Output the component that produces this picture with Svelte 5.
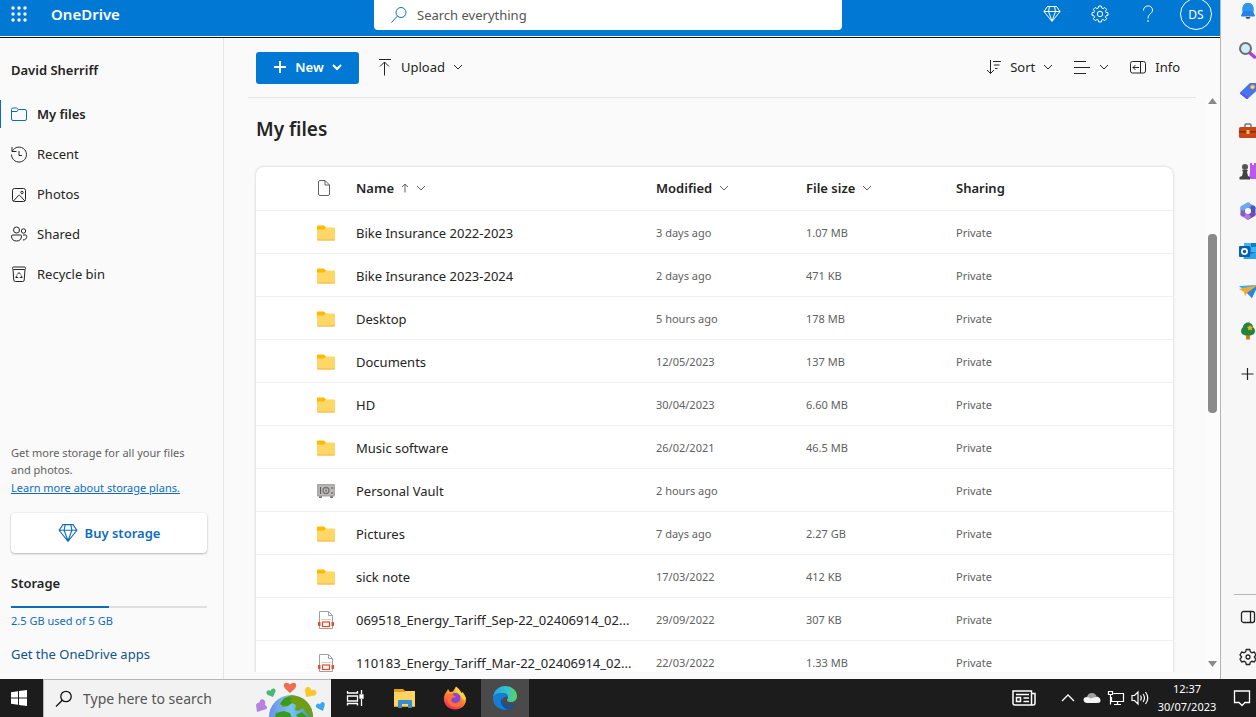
<script lang="ts">
	type FileRow = {
		name: string;
		kind: 'folder' | 'vault' | 'pdf';
		modified: string;
		size: string;
	};

	const navItems = [
		{ label: 'My files', icon: 'files' },
		{ label: 'Recent', icon: 'recent' },
		{ label: 'Photos', icon: 'photos' },
		{ label: 'Shared', icon: 'shared' },
		{ label: 'Recycle bin', icon: 'bin' }
	];

	const files: FileRow[] = [
		{ name: 'Bike Insurance 2022-2023', kind: 'folder', modified: '3 days ago', size: '1.07 MB' },
		{ name: 'Bike Insurance 2023-2024', kind: 'folder', modified: '2 days ago', size: '471 KB' },
		{ name: 'Desktop', kind: 'folder', modified: '5 hours ago', size: '178 MB' },
		{ name: 'Documents', kind: 'folder', modified: '12/05/2023', size: '137 MB' },
		{ name: 'HD', kind: 'folder', modified: '30/04/2023', size: '6.60 MB' },
		{ name: 'Music software', kind: 'folder', modified: '26/02/2021', size: '46.5 MB' },
		{ name: 'Personal Vault', kind: 'vault', modified: '2 hours ago', size: '' },
		{ name: 'Pictures', kind: 'folder', modified: '7 days ago', size: '2.27 GB' },
		{ name: 'sick note', kind: 'folder', modified: '17/03/2022', size: '412 KB' },
		{ name: '069518_Energy_Tariff_Sep-22_02406914_02...', kind: 'pdf', modified: '29/09/2022', size: '307 KB' },
		{ name: '110183_Energy_Tariff_Mar-22_02406914_02...', kind: 'pdf', modified: '22/03/2022', size: '1.33 MB' }
	];

	const edgeApps = ['bell', 'search', 'tag', 'toolbox', 'games', 'office', 'outlook', 'plane', 'tree', 'plus'];

	const usedGb = 2.5;
	const totalGb = 5;

	let selected = $state('My files');
	let query = $state('');
	let taskQuery = $state('');
</script>

{#snippet chevron()}
	<svg class="chevron" width="10" height="10" viewBox="0 0 10 10"><path d="M1 3l4 4 4-4" /></svg>
{/snippet}

{#snippet diamond(size: number)}
	<svg class="line" width={size} height={size} viewBox="0 0 18 18">
		<path d="M4.500 1.500h9l3.500 5-8 10-8-10zM1 6.500h16M6.500 1.500L5.500 6.500 9 16l3.500-9.500-1-5" />
	</svg>
{/snippet}

{#snippet gear()}
	<svg class="line" width="18" height="18" viewBox="0 0 18 18">
		<circle cx="9" cy="9" r="2.700" />
		<path d="M7.700 1h2.600l.4 2 1.300.6 1.800-1.100 1.800 1.800-1.100 1.800.6 1.300 1.900.4v2.500l-1.900.4-.6 1.400 1.100 1.700-1.800 1.800-1.800-1.100-1.300.6-.4 1.900H7.700l-.4-1.900-1.300-.6-1.800 1.100-1.800-1.800 1.100-1.700-.6-1.400L1 10.300V7.800l1.900-.4.6-1.300-1.100-1.800 1.800-1.800L6 3.600 7.300 3z" />
	</svg>
{/snippet}

{#snippet navIcon(name: string)}
	<svg class="line" width="18" height="18" viewBox="0 0 18 18">
		{#if name === 'files'}
			<path d="M1.500 5V4.500q0-1.500 1.500-1.500h3.500l2 1.500H15q1.500 0 1.500 1.500V14q0 1.500-1.500 1.500H3Q1.500 15.500 1.500 14zM1.500 6.500h5.500l1.500-2" />
		{:else if name === 'recent'}
			<path d="M2 2v4.500h4.500M2.300 6.200A7.500 7.500 0 1 1 1.500 9.500M9 6v4.500h3" />
		{:else if name === 'photos'}
			<rect x="2.500" y="3.500" width="13" height="13" rx="2" />
			<circle cx="12" cy="7.500" r="1.200" />
			<path d="M3.500 16l5-5.500q.7-.7 1.400 0l5 5.500" />
		{:else if name === 'shared'}
			<circle cx="6.500" cy="5" r="3" />
			<circle cx="13.500" cy="6" r="2.200" />
			<path d="M3 10h7.500q1 0 1 1c0 3-1.500 5-5 5s-5-2-5-5q0-1 1.500-1zM13 10h2.500q1.300 0 1.300 1.300c0 2.200-1.500 3.700-4 3.700" />
		{:else}
			<rect x="2.500" y="2" width="13" height="2.500" rx="1" />
			<path d="M3 4.500l.8 10.500q.1 1.500 1.500 1.500h7.400q1.400 0 1.500-1.500L15 4.500" />
			<path d="M7.300 9.500L9 7.500l1.700 2M6.800 10.500l-1 2h2.400M11.200 10.500l1 2H9.800" />
		{/if}
	</svg>
{/snippet}

{#snippet fileIcon(kind: string)}
	<svg class="file-icon" width="20" height="20" viewBox="0 0 20 20">
		{#if kind === 'folder'}
			<path d="M1 3.500q0-1 1-1h6l2 2-2 3H1z" fill="#ffb900" />
			<path d="M1 6.500h7l2-2h8q1 0 1 1v11q0 1-1 1H2q-1 0-1-1z" fill="#ffd766" />
			<path d="M1 16.500h18q0 1-1 1H2q-1 0-1-1z" fill="#f5b64b" />
		{:else if kind === 'vault'}
			<path d="M3 15h3v2H3zM14 15h3v2h-3z" fill="#7d7b79" />
			<rect x="1" y="3" width="18" height="12.500" rx="1" fill="#a8a6a4" />
			<rect x="2.500" y="4.500" width="15" height="9.500" fill="#bebbb8" />
			<path d="M4.500 6v7M16 6v2M16 11v2" stroke="#5f5d5b" stroke-width="1.200" />
			<circle cx="10" cy="9.500" r="3" fill="none" stroke="#777573" stroke-width="1.300" />
			<circle cx="10" cy="9.500" r="1" fill="#777573" />
		{:else}
			<path d="M3.500 1.500h9l4 4v13h-13z" fill="#fff" stroke="#a19f9d" />
			<path d="M12.500 1.500v4h4" fill="none" stroke="#a19f9d" />
			<path d="M5 9.500h10" stroke="#d0cecc" />
			<path d="M2 12h2.500v4H2zM15.500 12H18v4h-2.500z" fill="#d65532" />
			<rect x="5" y="11" width="10" height="6.500" fill="#fff" />
			<rect x="6.500" y="12" width="7" height="4.500" fill="#fff" stroke="#e0492b" stroke-width="1.200" />
		{/if}
	</svg>
{/snippet}

{#snippet edgeIcon(name: string)}
	<svg width="20" height="20" viewBox="0 0 20 20">
		{#if name === 'bell'}
			<path d="M7.500 16h5q-.5 2-2.500 2t-2.500-2z" fill="#555" />
			<path d="M10 2c-4 0-5.500 3-5.500 6v3.500L3 14.500q0 1 1 1h12q1 0 1-1l-1.500-3V8c0-3-1.500-6-5.500-6z" fill="#2782e8" />
			<path d="M10 2c-4 0-5.500 3-5.500 6v2h11V8c0-3-1.500-6-5.500-6z" fill="#2f98ed" />
		{:else if name === 'search'}
			<path d="M12.500 12.500l4 3.500" stroke="#b13ee0" stroke-width="3.500" stroke-linecap="round" />
			<circle cx="7.500" cy="7.500" r="5.500" fill="#ccecfa" stroke="#6d6d6d" stroke-width="2" />
		{:else if name === 'tag'}
			<path d="M12 2h6q1.500 0 1.500 1.500V9L10 17.500q-1 1-2 0L2.500 13q-1-1 0-2z" fill="#4775ee" />
			<path d="M2.300 11.500l8 4.500-1 1.800q-.7.400-1.300-.3L2.500 13z" fill="#664df0" />
			<circle cx="14.500" cy="6" r="2" fill="#f7d98a" stroke="#f0a229" />
		{:else if name === 'toolbox'}
			<path d="M7 6V4q0-1 1-1h4q1 0 1 1v2" fill="none" stroke="#777" stroke-width="1.500" />
			<rect x="1" y="6" width="19" height="11" rx="1.500" fill="#c94618" />
			<path d="M1 10h19v1.500H1z" fill="#872d0e" />
			<rect x="8.500" y="9" width="3" height="4" fill="#ffc24b" />
		{:else if name === 'games'}
			<path d="M12 2h2v2h2V2h2v2h2v14h-9l1-7z" fill="#b957ef" />
			<circle cx="7" cy="6" r="3" fill="#555" />
			<path d="M4 9h6l-1 2 1 4 2 1v2.500H1.500V16L4 15l1-4z" fill="#444" />
		{:else if name === 'office'}
			<g fill="none" stroke-width="5">
				<path d="M10 4.500L15 7.200" stroke="#5a8fe8" stroke-linecap="round" />
				<path d="M15 7v6" stroke="#4a56b8" stroke-linecap="round" />
				<path d="M15 13l-5 3" stroke="#6a4fae" stroke-linecap="round" />
				<path d="M10 16l-5-3" stroke="#b07ae0" stroke-linecap="round" />
				<path d="M5 13V7" stroke="#7d62c4" stroke-linecap="round" />
				<path d="M5 7l5-3" stroke="#6ba8ee" stroke-linecap="round" />
			</g>
			<circle cx="10" cy="10" r="3" fill="#f7f7f7" />
		{:else if name === 'outlook'}
			<path d="M6 2h14v15H6z" fill="#1a7bcb" />
			<path d="M6 2h7v4H6zM13 6h7v5h-7z" fill="#38b9f0" />
			<path d="M5 17l15-7v8H6z" fill="#2fa5e7" />
			<rect x="1" y="5" width="11" height="11" rx="1" fill="#0a5db4" />
			<circle cx="6.500" cy="10.500" r="2.600" fill="none" stroke="#fff" stroke-width="1.700" />
		{:else if name === 'plane'}
			<path d="M1 5l19-1-6 13-5-5z" fill="#3cadf2" />
			<path d="M1 8l19-4-11 8-2 3-1-4z" fill="#f2a92c" />
			<path d="M9 12L20 4l-6 13z" fill="#2b86dd" />
		{:else if name === 'tree'}
			<path d="M8 13h4v5.500H8z" fill="#c98212" />
			<path d="M10 1.500c3 0 5 2.500 5 4.500 2 2 2.500 4 1.500 6-1 2-3 2.500-6.500 2.500S4.500 14 3.500 12s-.5-4 1.500-6c0-2 2-4.500 5-4.500z" fill="#23853b" />
			<path d="M12 4l1 1.500 2 .5-1.300 1.500.3 2-2-1-2 1 .3-2L9 6l2-.5z" fill="#f1af22" />
		{:else}
			<path d="M9.500 4v12M3.500 10h12" stroke="#222" stroke-width="1.200" />
		{/if}
	</svg>
{/snippet}

<div class="screen">
	<div class="browser">
		<div class="onedrive">
			<header class="suite-bar">
				<div class="brand">
					<button class="waffle" aria-label="App launcher">
						<svg width="16" height="16" viewBox="0 0 16 16" fill="#fff">
							{#each [2, 8, 14] as y}
								{#each [2, 8, 14] as x}
									<circle cx={x} cy={y} r="1.700" />
								{/each}
							{/each}
						</svg>
					</button>
					<a href="#home">OneDrive</a>
				</div>
				<label class="search">
					<svg width="18" height="18" viewBox="0 0 18 18">
						<circle cx="11" cy="6.500" r="5" />
						<path d="M7.500 10L1.500 16.500" />
					</svg>
					<input type="text" placeholder="Search everything" aria-label="Search everything" bind:value={query} />
				</label>
				<div class="suite-actions">
					<button aria-label="Premium">{@render diamond(18)}</button>
					<button aria-label="Settings">{@render gear()}</button>
					<button aria-label="Help">
						<svg class="line" width="18" height="18" viewBox="0 0 18 18">
							<path d="M4.500 5.500c0-6 9-6 9-.5 0 4-4.500 3.500-4.500 8.500" />
							<circle cx="9" cy="16" r=".5" />
						</svg>
					</button>
					<button aria-label="Account"><span class="avatar">DS</span></button>
				</div>
			</header>

			<div class="body">
				<aside class="sidebar">
					<h2>David Sherriff</h2>
					<nav>
						{#each navItems as item}
							<a
								href="#{item.icon}"
								class:active={selected === item.label}
								onclick={() => (selected = item.label)}
							>
								{@render navIcon(item.icon)}
								{item.label}
							</a>
						{/each}
					</nav>

					<div class="storage">
						<p>Get more storage for all your files and photos.</p>
						<a class="learn" href="#plans">Learn more about storage plans.</a>
						<button class="buy">{@render diamond(20)} Buy storage</button>
						<h3>Storage</h3>
						<div class="meter">
							<div class="meter-fill" style="width: {(usedGb / totalGb) * 100}%"></div>
						</div>
						<a class="usage" href="#usage">{usedGb} GB used of {totalGb} GB</a>
						<a class="apps" href="#apps">Get the OneDrive apps</a>
					</div>
				</aside>

				<main>
					<div class="toolbar">
						<button class="new">
							<svg class="plus" width="14" height="14" viewBox="0 0 14 14"><path d="M7 1v12M1 7h12" /></svg>
							New
							{@render chevron()}
						</button>
						<button class="command">
							<svg class="line" width="16" height="18" viewBox="0 0 16 18"><path d="M2 1.500h12M7.500 17.500V4M3 8.500L7.500 4 12 8.500" /></svg>
							<span>Upload</span>
							{@render chevron()}
						</button>
						<div class="spacer"></div>
						<button class="command">
							<svg class="line" width="16" height="16" viewBox="0 0 16 16"><path d="M4.500 1v13.500M1 11l3.500 3.500L8 11M7 2.500h8M8 6h5.500M9 9.500h2.500" /></svg>
							<span>Sort</span>
							{@render chevron()}
						</button>
						<button class="command" aria-label="View options">
							<svg class="line" width="18" height="16" viewBox="0 0 18 16"><path d="M1 2.500h12M1 8.500h16M1 14.500h12" /></svg>
							{@render chevron()}
						</button>
						<button class="command">
							<svg class="line" width="18" height="16" viewBox="0 0 18 16">
								<rect x="1.500" y="2.500" width="15" height="11.500" rx="2" />
								<path d="M11.500 2.500V14M10 8.500H4M6.500 6L4 8.500 6.500 11" />
							</svg>
							<span>Info</span>
						</button>
					</div>

					<div class="view">
						<div class="files">
							<h1>My files</h1>
							<div class="card">
								<table>
									<thead>
										<tr>
											<th class="col-icon" aria-label="File type">
												<svg class="page-icon" width="14" height="18" viewBox="0 0 14 18"><path d="M1.500 3q0-1.500 1.500-1.500h5l4.500 4.500v9q0 1.500-1.500 1.500H3Q1.500 16.500 1.500 15zM8 1.500V6h4.500" /></svg>
											</th>
											<th class="col-name">
												<button>
													Name
													<svg class="arrow" width="8" height="10" viewBox="0 0 8 10"><path d="M4 9.500V1M1 4l3-3 3 3" /></svg>
													{@render chevron()}
												</button>
											</th>
											<th class="col-meta"><button>Modified {@render chevron()}</button></th>
											<th class="col-meta"><button>File size {@render chevron()}</button></th>
											<th>Sharing</th>
										</tr>
									</thead>
									<tbody>
										{#each files as file}
											<tr>
												<td class="col-icon">{@render fileIcon(file.kind)}</td>
												<td class="name"><a href="#file">{file.name}</a></td>
												<td>{file.modified}</td>
												<td>{file.size}</td>
												<td>Private</td>
											</tr>
										{/each}
									</tbody>
								</table>
							</div>
						</div>
						<div class="scrollbar" aria-hidden="true">
							<svg width="9" height="6" viewBox="0 0 9 6"><path d="M0 6l4.500-6L9 6z" /></svg>
							<div class="track"><div class="thumb"></div></div>
							<svg width="9" height="6" viewBox="0 0 9 6"><path d="M0 0l4.500 6L9 0z" /></svg>
						</div>
					</div>
				</main>
			</div>
		</div>

		<aside class="edge-bar">
			{#each edgeApps as app}
				<button aria-label={app}>{@render edgeIcon(app)}</button>
			{/each}
			<div class="edge-bottom">
				<button aria-label="Hide sidebar">
					<svg class="line" width="16" height="16" viewBox="0 0 16 16"><rect x="1.500" y="2.500" width="13" height="11" rx="2" /><path d="M10.500 2.500v11" /></svg>
				</button>
				<button aria-label="Sidebar settings">
					<svg class="line" width="18" height="18" viewBox="0 0 18 18">
						<circle cx="9" cy="9" r="2" />
						<path d="M7.300 1.500h3.400l.7 2.400 1.500.8 2.400-.6L17 7l-1.700 2 1.700 2-1.700 2.900-2.400-.6-1.500.8-.7 2.400H7.300l-.7-2.400-1.500-.8-2.400.6L1 11l1.700-2L1 7l1.700-2.900 2.400.6 1.500-.8z" />
					</svg>
				</button>
			</div>
		</aside>
	</div>

	<footer class="taskbar">
		<button class="start" aria-label="Start">
			<svg width="18" height="18" viewBox="0 0 18 18" fill="#fff"><path d="M1 3.200l7-1v6.300H1zM9 2l8-1v7.500H9zM1 9.500h7v6.300l-7-1zM9 9.500h8V17l-8-1z" /></svg>
		</button>
		<label class="task-search">
			<svg width="18" height="18" viewBox="0 0 18 18">
				<circle cx="11" cy="6.500" r="5.200" />
				<path d="M7.300 10.200L1 16.500" />
			</svg>
			<input type="text" placeholder="Type here to search" aria-label="Type here to search" bind:value={taskQuery} />
			<svg class="globe" width="72" height="37" viewBox="0 0 72 37">
				<defs>
					<clipPath id="world"><circle cx="36" cy="37" r="22" /></clipPath>
					<linearGradient id="sea"><stop offset="0" stop-color="#6b8fe8" /><stop offset=".5" stop-color="#7ac5ef" /><stop offset="1" stop-color="#3a8fd2" /></linearGradient>
				</defs>
				<circle cx="36" cy="37" r="22" fill="url(#sea)" />
				<g clip-path="url(#world)">
					<path d="M25 24l4-6 8-3 12 3 8 9 1 11-6-3-4-7-5 3-3-1 1-5-4-2-4 3-5 1z" fill="#6f9e14" />
					<path d="M25 24l3-4 5-3 4 1-2 3 2 2-5 3zM21 33l8-2 6 2 2 5H20zM41 35l6-3 5 5h-9z" fill="#3a9a1d" />
				</g>
				<path d="M35 13l-5-4.500Q27.500 5 30 3q3-1 5 1.500Q37 2 40 3q2.500 2 0 5.500z" fill="#ed6e51" />
				<path d="M18 17l-5-2q-2.500-1.500-1-4 1.500-1.500 3.500 0 .5-3 3.500-2.500 2.500 1 1 4z" fill="#44b971" />
				<path d="M51 17l-1-7q.5-3.500 3.500-3 2.500.5 2.500 3.500 3-1.500 5 .5 1.500 3-1.500 4.500z" fill="#fbc52c" />
				<path d="M2 32l-1-7q1-3 3.500-2.500.5-4 4-3 2.500 1.500 1.500 5.500 3 1 1.500 4z" fill="#b583dd" />
				<path d="M68 31l-6-3q-2.500-2 0-4 1.500-1 3 .5.500-3 3-2.500 2.500 1 1.500 4z" fill="#3ba8ec" />
			</svg>
		</label>
		<div class="apps-row">
			<button class="app" aria-label="Task view">
				<svg width="18" height="18" viewBox="0 0 18 18" fill="none" stroke="#fff" stroke-width="1.300"><path d="M1.500 2V4h10V2M1.500 16.500v-2h10v2M1.500 7h10v5h-10zM15.500 1v4M15.500 10v7" /><path d="M14 6h3v3h-3z" fill="#fff" /></svg>
			</button>
			<button class="app" aria-label="File Explorer">
				<svg width="24" height="24" viewBox="0 0 24 24">
					<path d="M1 3h9l2 2h10v16H1z" fill="#e99f13" />
					<path d="M1 6h10l2-1h9v15H1z" fill="#ffd362" />
					<path d="M5 22v-7q0-1 1-1h12q1 0 1 1v7h-4v-4H9v4z" fill="#318fd2" />
				</svg>
			</button>
			<button class="app" aria-label="Firefox">
				<svg width="24" height="24" viewBox="0 0 24 24">
					<defs>
						<linearGradient id="fox" x1=".8" y1="0" x2=".3" y2="1"><stop offset="0" stop-color="#ffe24a" /><stop offset=".5" stop-color="#ff8a2a" /><stop offset="1" stop-color="#f0235f" /></linearGradient>
					</defs>
					<path d="M4 5l1-2 2 3 3-.5 3-5q3 2 4 5 4 2 6 6c1 7-4 12-11 12S0 18 1 11q1-4 3-6z" fill="url(#fox)" />
					<circle cx="12.500" cy="12" r="5" fill="#8047d8" />
					<path d="M4 8l5 0 4 3-4 1-1 3q1 3 5 3 5-1 6-6 1 8-6 9c-6 0-10-5-9-13z" fill="#ff7139" />
					<path d="M13 1q5 3 5.500 7 1-1 .5-2.500 4 4 3 9l-3-2q-1-4-4-5-3-2-2-6.500z" fill="#ffd140" />
				</svg>
			</button>
			<button class="app current" aria-label="Microsoft Edge">
				<svg width="24" height="24" viewBox="0 0 24 24">
					<defs>
						<linearGradient id="edge"><stop offset="0" stop-color="#259fe4" /><stop offset=".6" stop-color="#35c4cf" /><stop offset="1" stop-color="#62d255" /></linearGradient>
					</defs>
					<path d="M0 11C1 4 6 0 12 0c7 0 12 5 12 10 0 4-3 6-6 6-2 0-4-.5-4-2 0-1 1-1 1-3 0-2-2-4-6-4q-5 0-9 4z" fill="url(#edge)" />
					<path d="M0 11q3-4 8-4c4 0 7 2 7 4-2-1-6 0-6 4 0 4 4 7 8 8C8 26-1 20 0 11z" fill="#147fd0" />
					<path d="M9 12c-3 4 0 10 6 11.500 3-.5 6-2.500 7.500-5-8 3-14 0-13.500-6.500z" fill="#1053a0" />
				</svg>
			</button>
		</div>
		<div class="tray">
			<button class="news" aria-label="News and interests">
				<svg width="24" height="18" viewBox="0 0 24 18" fill="none" stroke="#fff" stroke-width="1.500"><path d="M1 2h18.500v14H3q-2 0-2-2zM19.500 4.500H23V14q0 2-2 2h-3M4 5.500h13M11.500 9H17M11.500 12.500H17M4.500 8.500h4v4h-4z" /></svg>
			</button>
			<button aria-label="Show hidden icons">
				<svg width="14" height="10" viewBox="0 0 14 10" fill="none" stroke="#fff" stroke-width="1.300"><path d="M1 8l6-6 6 6" /></svg>
			</button>
			<button aria-label="OneDrive status">
				<svg width="18" height="14" viewBox="0 0 18 14"><path d="M4 6Q5 2 9 2q3 0 4.500 3L9 9 3 11z" fill="#a2a2a2" /><path d="M4 12q-3 0-3.500-3Q.5 6 4 6q2 0 3.500 1.500L14 5.500q3.500 1 3.500 4 0 2.500-3 2.500z" fill="#f4f4f4" /></svg>
			</button>
			<button aria-label="Network">
				<svg width="18" height="16" viewBox="0 0 18 16" fill="none" stroke="#fff" stroke-width="1.200"><path d="M6.500 3.500h10v8h-12V7M10.500 11.500v3M7 14.500h7M1.500 1.500h4v3h-4zM3.500 4.500v10" /></svg>
			</button>
			<button aria-label="Volume">
				<svg width="18" height="16" viewBox="0 0 18 16" fill="none" stroke="#fff" stroke-width="1.200"><path d="M1 5.500h2.500L7 2v12l-3.500-3.500H1zM9.500 5.500q1.500 2.500 0 5M12 4q3 4 0 8M14.500 2q4.500 6 0 12" /></svg>
			</button>
			<div class="clock"><span>12:37</span><span>30/07/2023</span></div>
			<button class="notifications" aria-label="Notifications">
				<svg width="18" height="18" viewBox="0 0 18 18" fill="none" stroke="#fff" stroke-width="1.300"><path d="M1.500 2h15v11.500H12l-3 3-3-3H1.500z" /></svg>
			</button>
		</div>
	</footer>
</div>

<style>
	:global(body) {
		margin: 0;
		overflow: hidden;
	}

	.screen {
		display: flex;
		flex-direction: column;
		height: 100vh;
		font-family: 'Noto Sans', 'Open Sans', sans-serif;
		font-size: 13px;
		line-height: 20px;
		color: #242424;
		background: #fafafa;
	}

	.screen * {
		box-sizing: border-box;
	}

	svg {
		flex-shrink: 0;
	}

	button {
		display: flex;
		align-items: center;
		justify-content: center;
		padding: 0;
		border: 0;
		background: none;
		font: inherit;
		color: inherit;
		cursor: pointer;
	}

	input {
		flex: 1;
		min-width: 0;
		padding: 0;
		border: 0;
		outline: 0;
		background: none;
		font: inherit;
		color: inherit;
	}

	input::placeholder {
		color: #555;
		opacity: 1;
	}

	a {
		color: inherit;
		text-decoration: none;
	}

	.line,
	.chevron,
	.plus,
	.arrow,
	.page-icon {
		fill: none;
		stroke: currentColor;
		stroke-width: 1;
	}

	.browser {
		display: flex;
		flex: 1;
		min-height: 0;
	}

	.onedrive {
		display: flex;
		flex-direction: column;
		flex: 1;
		min-width: 0;
	}

	/* Suite bar */
	.suite-bar {
		display: grid;
		grid-template-columns: 1fr minmax(0, 472px) 1fr;
		height: 38px;
		padding-bottom: 8px;
		background: linear-gradient(#0078d4 36px, #fff 36px, #fff 37px, #111 37px);
		color: #fff;
	}

	.brand,
	.suite-actions {
		height: 28px;
	}

	.brand {
		display: flex;
		align-items: center;
		gap: 24px;
		padding-left: 11px;
		font-size: 15px;
		font-weight: 600;
	}

	.waffle {
		width: 16px;
	}

	.search {
		display: flex;
		align-items: center;
		gap: 9px;
		margin-right: 4px;
		padding: 0 16px;
		border-radius: 0 0 4px 4px;
		background: #fff;
		color: #333;
	}

	.search svg {
		fill: none;
		stroke: #0f6cbd;
	}

	.suite-actions {
		display: flex;
		justify-content: flex-end;
	}

	.suite-actions button {
		width: 48px;
	}

	.avatar {
		width: 32px;
		height: 32px;
		flex-shrink: 0;
		border: 1px solid #fff;
		border-radius: 50%;
		font-size: 12px;
		line-height: 32px;
	}

	.body {
		display: flex;
		flex: 1;
		min-height: 0;
	}

	/* Sidebar */
	.sidebar {
		display: flex;
		flex-direction: column;
		width: 224px;
		flex-shrink: 0;
		padding-top: 22px;
		border-right: 1px solid #e6e6e6;
	}

	.sidebar h2,
	.sidebar h3 {
		margin: 0;
		font-size: 13px;
		font-weight: 600;
	}

	.sidebar h2 {
		padding-left: 11px;
	}

	nav {
		display: flex;
		flex-direction: column;
		gap: 12px;
		margin-top: 20px;
	}

	nav a {
		display: flex;
		align-items: center;
		gap: 9px;
		height: 28px;
		padding-left: 9px;
		border-left: 1px solid transparent;
	}

	nav a.active {
		border-color: #0f6cbd;
		font-weight: 600;
	}

	nav a.active svg {
		color: #0f6cbd;
	}

	.storage {
		display: flex;
		flex-direction: column;
		margin-top: auto;
		padding: 0 16px 15px 11px;
		font-size: 11px;
	}

	.storage p {
		margin: 0;
		padding-right: 8px;
		line-height: 17px;
		color: #616161;
	}

	.storage a {
		color: #0f6cbd;
	}

	.storage .learn {
		text-decoration: underline;
	}

	.buy {
		gap: 7px;
		height: 40px;
		margin: 15px 0 20px;
		border-radius: 4px;
		background: #fff;
		box-shadow: 0 1px 2px rgba(0, 0, 0, 0.24), 0 0 2px rgba(0, 0, 0, 0.12);
		font-size: 13px;
		font-weight: 600;
		color: #0f6cbd;
	}

	.meter {
		height: 2px;
		margin: 13px 0 3px;
		background: #e0e0e0;
	}

	.meter-fill {
		height: 100%;
		background: #0f6cbd;
	}

	.storage .apps {
		margin-top: 13px;
		font-size: 13px;
		color: #0f548c;
	}

	/* Main area */
	main {
		display: flex;
		flex-direction: column;
		flex: 1;
		min-width: 0;
		padding-bottom: 7px;
	}

	.toolbar {
		display: flex;
		align-items: center;
		gap: 20px;
		height: 60px;
		margin: 0 24px;
		padding: 0 16px 0 8px;
		border-bottom: 1px solid #e6e6e6;
	}

	.toolbar button {
		gap: 8px;
		height: 32px;
		padding-bottom: 2px;
	}

	.toolbar .new {
		width: 103px;
		margin-right: -2px;
		border-radius: 3px;
		background: #0078d4;
		font-weight: 600;
		color: #fff;
	}

	.plus,
	.new .chevron {
		stroke-width: 2;
	}

	.spacer {
		flex: 1;
	}

	.view {
		display: flex;
		flex: 1;
		min-height: 0;
	}

	.files {
		flex: 1;
		min-width: 0;
		overflow: hidden;
		padding: 17px 32px 0;
	}

	h1 {
		margin: 0 0 24px;
		font-size: 19px;
		line-height: 28px;
		font-weight: 600;
	}

	.card {
		border-radius: 8px;
		background: #fff;
		box-shadow: 0 0 3px rgba(0, 0, 0, 0.2);
	}

	table {
		width: 100%;
		table-layout: fixed;
		border-spacing: 0;
	}

	th,
	td {
		height: 43px;
		padding: 0;
		border-bottom: 1px solid #f0f0f0;
		text-align: left;
	}

	th {
		height: 44px;
		padding-bottom: 2px;
		font-weight: 600;
	}

	td {
		padding-top: 1px;
		font-size: 11px;
		color: #616161;
	}

	th button {
		gap: 7px;
	}

	.col-icon {
		width: 100px;
		padding-left: 60px;
	}

	.col-name {
		width: 300px;
	}

	.col-meta {
		width: 150px;
	}

	.name {
		padding-right: 20px;
		overflow: hidden;
		font-size: 13px;
		white-space: nowrap;
		color: #242424;
	}

	.file-icon,
	.page-icon {
		display: block;
	}

	.page-icon {
		margin-left: 1px;
		color: #616161;
	}

	th .arrow,
	th .chevron {
		color: #616161;
	}

	.scrollbar {
		display: flex;
		flex-direction: column;
		align-items: center;
		width: 15px;
		padding-bottom: 5px;
		background: #fcfcfc;
		fill: #8a8a8a;
	}

	.track {
		display: grid;
		grid-template-rows: 130fr 179fr 248fr;
		flex: 1;
		width: 9px;
	}

	.thumb {
		grid-row: 2;
		border-radius: 4px;
		background: #8a8a8a;
	}

	/* Edge sidebar */
	.edge-bar {
		display: flex;
		flex-direction: column;
		width: 36px;
		overflow: hidden;
		padding-left: 13px;
		border-left: 1px solid #b5b5b5;
		background: #f7f7f7;
	}

	.edge-bar button {
		width: 28px;
		height: 40px;
		flex-shrink: 0;
	}

	.edge-bar > button:first-child {
		height: 31px;
		padding-bottom: 10px;
	}

	.edge-bar > button:last-of-type {
		height: 46px;
	}

	.edge-bottom {
		margin-top: auto;
		padding: 2px 0;
		border-top: 1px solid #b5b5b5;
	}

	.edge-bottom .line {
		stroke-width: 1.3;
	}

	/* Taskbar */
	.taskbar {
		display: flex;
		height: 38px;
		flex-shrink: 0;
		background: #1c1c1c;
		color: #fff;
	}

	.start {
		width: 43px;
		padding-right: 6px;
	}

	.task-search {
		display: flex;
		align-items: center;
		gap: 10px;
		width: 288px;
		padding: 0 4px 0 11px;
		border: 1px solid #b5b5b5;
		border-width: 1px 0 0 1px;
		background: #f2f2f2;
		font-size: 14px;
		color: #333;
	}

	.task-search > svg:first-child {
		fill: none;
		stroke: #111;
		stroke-width: 1.3;
	}

	.apps-row {
		display: flex;
		gap: 2px;
	}

	.app {
		width: 48px;
	}

	.current {
		background: #4a4a4a;
	}

	.tray {
		display: flex;
		align-items: center;
		margin-left: auto;
	}

	.tray button {
		width: 24px;
		height: 38px;
	}

	.tray .news {
		margin-right: 20px;
	}

	.clock {
		display: flex;
		flex-direction: column;
		align-items: center;
		width: 70px;
		font-size: 11px;
		line-height: 18px;
	}

	.tray .notifications {
		width: 28px;
		margin-left: 6px;
	}
</style>
